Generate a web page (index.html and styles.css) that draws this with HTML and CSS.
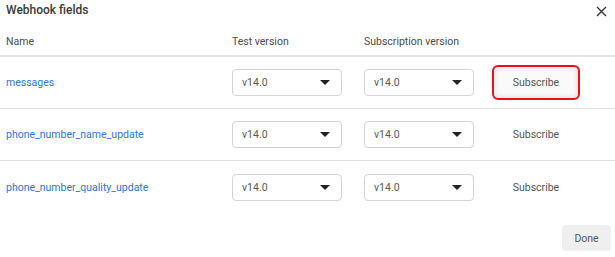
FILE: index.html
```html
<!DOCTYPE html>
<html lang="en">
<head>
  <meta charset="UTF-8">
  <title>Webhook fields</title>
  <link rel="stylesheet" href="styles.css">
</head>
<body>
  <div class="dialog">
    <div class="dialog-head">
      <h1>Webhook fields</h1>
      <button class="close" aria-label="Close">
        <svg width="11" height="11" viewBox="0 0 11 11"><path d="M1 1L10 10M10 1L1 10" stroke="#333" stroke-width="1.4"/></svg>
      </button>
    </div>

    <div class="table">
      <div class="row head">
        <div class="cell name">Name</div>
        <div class="cell">Test version</div>
        <div class="cell">Subscription version</div>
        <div class="cell"></div>
      </div>

      <div class="row">
        <div class="cell name"><a href="#">messages</a></div>
        <div class="cell"><div class="select">v14.0<span class="caret"></span></div></div>
        <div class="cell"><div class="select">v14.0<span class="caret"></span></div></div>
        <div class="cell"><button class="subscribe focused">Subscribe</button></div>
      </div>

      <div class="row">
        <div class="cell name"><a href="#">phone_number_name_update</a></div>
        <div class="cell"><div class="select">v14.0<span class="caret"></span></div></div>
        <div class="cell"><div class="select">v14.0<span class="caret"></span></div></div>
        <div class="cell"><button class="subscribe">Subscribe</button></div>
      </div>

      <div class="row last">
        <div class="cell name"><a href="#">phone_number_quality_update</a></div>
        <div class="cell"><div class="select">v14.0<span class="caret"></span></div></div>
        <div class="cell"><div class="select">v14.0<span class="caret"></span></div></div>
        <div class="cell"><button class="subscribe">Subscribe</button></div>
      </div>
    </div>

    <div class="dialog-foot">
      <button class="done">Done</button>
    </div>
  </div>
</body>
</html>
```

FILE: styles.css
```css
body {
  margin: 0;
  background: #fff;
  color: #4b4b4b;
  font-family: Roboto, 'Liberation Sans', sans-serif;
  font-size: 10.5px;
}

.dialog {
  width: 615px;
  height: 257px;
  display: flex;
  flex-direction: column;
}

.dialog-head {
  display: flex;
  justify-content: space-between;
  align-items: center;
  height: 20px;
  padding: 0 8px 0 6px;
}

.dialog-head h1 {
  margin: 0;
  font-size: 12px;
  font-weight: 500;
  color: #3a3a3a;
}

.close {
  border: none;
  background: none;
  padding: 0;
  width: 12px;
  height: 12px;
  margin-top: 2px;
  display: flex;
  align-items: center;
  justify-content: center;
}

.row {
  display: grid;
  grid-template-columns: 232px 132px 128px 1fr;
  align-items: center;
  box-sizing: border-box;
  height: 52px;
  border-bottom: 1px solid #dedede;
}

.row.head {
  height: 37px;
  padding-top: 7px;
  border-bottom: 2px solid #e4e4e4;
}

.row.last {
  border-bottom: none;
}

.cell.name {
  padding-left: 6px;
}

.cell a {
  color: #3174d8;
  text-decoration: none;
}

.select {
  width: 110px;
  height: 27px;
  box-sizing: border-box;
  border: 1px solid #d4d4d4;
  border-radius: 4px;
  display: flex;
  align-items: center;
  justify-content: space-between;
  padding: 0 11px 0 9px;
  color: #5a5a5a;
}

.caret {
  width: 0;
  height: 0;
  border-left: 5px solid transparent;
  border-right: 5px solid transparent;
  border-top: 5px solid #222;
}

.subscribe {
  width: 88px;
  height: 35px;
  box-sizing: border-box;
  border: 2px solid transparent;
  border-radius: 6px;
  background: none;
  font-family: inherit;
  font-size: 10.5px;
  color: #555;
  padding: 0;
}

.subscribe.focused {
  border-color: #e8101a;
  box-shadow: inset 0 0 4px 2px #e6e6e6;
  background: #fafafa;
}

.dialog-foot {
  flex: 1;
  display: flex;
  justify-content: flex-end;
  align-items: flex-end;
  padding: 0 4px 6px 0;
}

.done {
  width: 49px;
  height: 26px;
  border: none;
  border-radius: 4px;
  background: #efefef;
  font-family: inherit;
  font-size: 10.5px;
  color: #555;
}
```
